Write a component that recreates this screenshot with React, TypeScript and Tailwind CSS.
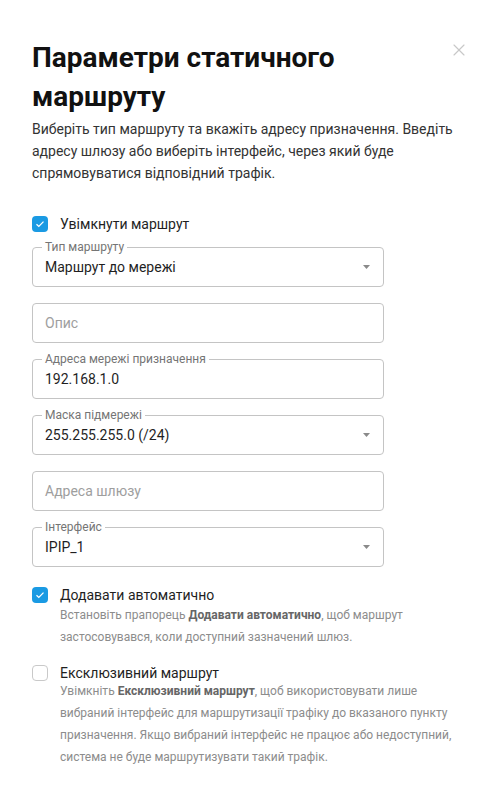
import { X } from "lucide-react";

type FieldProps = {
  label?: string;
  value?: string;
  placeholder?: string;
  select?: boolean;
};

function Field({ label, value, placeholder, select }: FieldProps) {
  return (
    <div className="relative flex h-10 w-[352px] items-center rounded border border-[#c4c4c4] px-3">
      {label && (
        <span className="absolute -top-[8px] left-[9px] bg-white px-[3px] text-[12px] leading-[14px] text-[#757575]">
          {label}
        </span>
      )}
      {value ? (
        <span className="flex-1 text-[14px] text-[#1f1f1f]">{value}</span>
      ) : (
        <span className="flex-1 text-[14px] text-[#9e9e9e]">{placeholder}</span>
      )}
      {select && (
        <svg width="7" height="4" viewBox="0 0 7 4" className="mr-[1px]">
          <path d="M0 0h7L3.5 4z" fill="#8a8a8a" />
        </svg>
      )}
    </div>
  );
}

function Check({ checked }: { checked: boolean }) {
  if (!checked) {
    return (
      <span className="h-4 w-4 shrink-0 rounded-[4px] border border-[#c9c9c9] bg-white" />
    );
  }
  return (
    <span className="flex h-4 w-4 shrink-0 items-center justify-center rounded-[4px] bg-[#1a9ae3]">
      <svg width="10" height="8" viewBox="0 0 10 8">
        <path d="M1.5 4.2l2.3 2.2L8.5 1.6" fill="none" stroke="white" strokeWidth="1.3" />
      </svg>
    </span>
  );
}

export default function App() {
  return (
    <div className="min-h-[790px] w-[500px] bg-white font-['Roboto',sans-serif]">
      <div className="relative px-8 pt-[38px]">
        <button className="absolute right-[31px] top-[40px] text-[#c8c8c8]">
          <X size={20} strokeWidth={1.4} />
        </button>
        <h1 className="w-[380px] text-[28px] font-bold leading-[39px] text-[#111]">
          Параметри статичного маршруту
        </h1>
        <p className="mt-[2px] text-[14px] leading-[22px] text-[#333]">
          Виберіть тип маршруту та вкажіть адресу призначення. Введіть адресу шлюзу або виберіть
          інтерфейс, через який буде спрямовуватися відповідний трафік.
        </p>

        <label className="mt-[32px] flex items-center gap-3">
          <Check checked />
          <span className="text-[14px] leading-[16px] text-[#1f1f1f]">Увімкнути маршрут</span>
        </label>

        <div className="mt-[15px] flex flex-col gap-4">
          <Field label="Тип маршруту" value="Маршрут до мережі" select />
          <Field placeholder="Опис" />
          <Field label="Адреса мережі призначення" value="192.168.1.0" />
          <Field label="Маска підмережі" value="255.255.255.0 (/24)" select />
          <Field placeholder="Адреса шлюзу" />
          <Field label="Інтерфейс" value="IPIP_1" select />
        </div>

        <div className="mt-[20px]">
          <label className="flex items-center gap-3">
            <Check checked />
            <span className="text-[14px] leading-[16px] text-[#1f1f1f]">Додавати автоматично</span>
          </label>
          <p className="mt-[1px] pl-7 text-[12px] leading-[22px] text-[#8c8c8c]">
            Встановіть прапорець <b className="font-bold text-[#666]">Додавати автоматично</b>,
            щоб маршрут застосовувався, коли доступний зазначений шлюз.
          </p>
        </div>

        <div className="mt-[17px]">
          <label className="flex items-center gap-3">
            <Check checked={false} />
            <span className="text-[14px] leading-[16px] text-[#1f1f1f]">Ексклюзивний маршрут</span>
          </label>
          <p className="mt-[-1px] pl-7 pr-[8px] text-[12px] leading-[22px] text-[#8c8c8c]">
            Увімкніть <b className="font-bold text-[#666]">Ексклюзивний маршрут</b>, щоб
            використовувати лише вибраний інтерфейс для маршрутизації трафіку до вказаного пункту
            призначення. Якщо вибраний інтерфейс не працює або недоступний, система не буде
            маршрутизувати такий трафік.
          </p>
        </div>
      </div>
    </div>
  );
}
